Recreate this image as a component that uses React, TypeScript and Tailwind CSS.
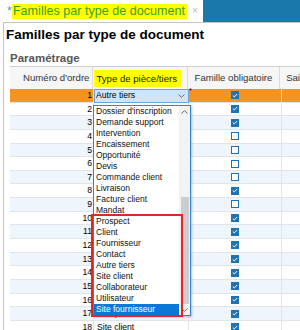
import React from 'react';

const ITEMS = [
  "Dossier d'inscription",
  'Demande support',
  'Intervention',
  'Encaissement',
  'Opportunité',
  'Devis',
  'Commande client',
  'Livraison',
  'Facture client',
  'Mandat',
  'Prospect',
  'Client',
  'Fournisseur',
  'Contact',
  'Autre tiers',
  'Site client',
  'Collaborateur',
  'Utilisateur',
  'Site fournisseur',
];

// row number, type, "famille obligatoire"
const ROWS: ReadonlyArray<{ n: number; type: string; req: boolean }> = [
  { n: 1, type: 'Autre tiers', req: true },
  { n: 2, type: "Dossier d'inscription", req: true },
  { n: 3, type: 'Demande support', req: true },
  { n: 4, type: 'Intervention', req: false },
  { n: 5, type: 'Encaissement', req: false },
  { n: 6, type: 'Opportunité', req: false },
  { n: 7, type: 'Devis', req: false },
  { n: 8, type: 'Commande client', req: true },
  { n: 9, type: 'Livraison', req: false },
  { n: 10, type: 'Facture client', req: true },
  { n: 11, type: 'Mandat', req: true },
  { n: 12, type: 'Client', req: true },
  { n: 13, type: 'Fournisseur', req: true },
  { n: 14, type: 'Contact', req: true },
  { n: 15, type: 'Collaborateur', req: true },
  { n: 16, type: 'Utilisateur', req: true },
  { n: 17, type: 'Prospect', req: true },
  { n: 18, type: 'Site client', req: true },
];

function CheckBox({ checked }: { checked: boolean }) {
  return (
    <span
      className={`flex items-center justify-center w-[8px] h-[8px] border border-[#1f73b4] ${
        checked ? 'bg-[#1f73b4]' : 'bg-white'
      }`}
    >
      {checked && (
        <svg width="6" height="5" viewBox="0 0 6 5" fill="none">
          <path d="M0.8 2.6 L2.3 3.9 L5.2 1" stroke="white" strokeWidth="1" />
        </svg>
      )}
    </span>
  );
}

function Chevron({ up = false }: { up?: boolean }) {
  return (
    <svg width="7" height="4" viewBox="0 0 7 4" fill="none">
      <path d={up ? 'M0.5 3.5 L3.5 0.7 L6.5 3.5' : 'M0.5 0.5 L3.5 3.3 L6.5 0.5'} stroke="#6b6b6b" strokeWidth="1" />
    </svg>
  );
}

export default function App() {
  return (
    <div className="relative w-[300px] h-[330px] overflow-hidden bg-white text-black font-['Liberation_Sans',Arial,sans-serif]">
      {/* tab bar */}
      <div className="flex h-[22px]">
        <div className="flex items-center w-[203px] bg-white pl-[7px] text-[12.6px] leading-[15px]">
          <span className="text-[#4aa3b4]">*</span>
          <span className="bg-[#ffff00] text-[#3f9e17] pl-[1px] pr-[2px]">Familles par type de document</span>
          <span className="ml-[5px] text-[10px] leading-[10px] text-[#b5b5b5]">×</span>
        </div>
        <div className="flex-1 bg-[#1a79aa]" />
      </div>

      <div className="ml-[3px] border-l border-t border-[#c4c4c4] h-[308px]">
        <div className="h-[24px] pl-[2px] text-[13.5px] leading-[24px] font-bold">Familles par type de document</div>

        <div className="ml-[6px] h-[20px] pt-[4px] border-b border-[#cfcfcf] text-[11.5px] leading-[14px] font-bold text-[#575757]">
          Paramétrage
        </div>

        <div className="ml-[6px]">
          {/* header */}
          <div className="flex h-[22px] bg-[#f6f6f6] text-[9.6px] text-[#333]">
            <div className="w-[84px] border-r border-[#dadada] flex items-center justify-end pr-[3px]">Numéro d'ordre</div>
            <div className="w-[95px] border-r border-[#dadada] flex items-center">
              <span className="ml-[1px] w-[87px] h-[17px] bg-[#ffff00] pl-[2px] leading-[17px] text-[#222]">
                Type de pièce/tiers
              </span>
            </div>
            <div className="w-[93px] border-r border-[#dadada] flex items-center justify-center">Famille obligatoire</div>
            <div className="flex-1 flex items-center pl-[6px]">Sai</div>
          </div>

          {/* body */}
          {ROWS.map((r, i) => {
            const sel = i === 0;
            const bg = sel ? 'bg-[#f39322]' : i % 2 === 1 ? 'bg-white' : 'bg-[#eef5fc]';
            return (
              <div key={r.n} className={`flex h-[13.65px] text-[8.6px] leading-[13.65px] ${bg}`}>
                <div className="w-[84px] border-r border-b border-[#e1e5ea] text-right pr-[1px]">{r.n}</div>
                {sel ? (
                  <div className="w-[95px] flex items-center justify-between bg-[#cfe4f7] border border-[#6aa5d8] pl-[1px] pr-[3px]">
                    <span>{r.type}</span>
                    <Chevron />
                  </div>
                ) : (
                  <div className="w-[95px] border-r border-b border-[#e1e5ea] pl-[3px]">{r.type}</div>
                )}
                <div className="relative w-[93px] border-r border-b border-[#e1e5ea] flex items-center justify-center">
                  {sel && <span className="absolute left-[0px] top-[-3px] text-[7px] leading-[10px]">*</span>}
                  <CheckBox checked={r.req} />
                </div>
                <div className="flex-1 border-b border-[#e1e5ea]" />
              </div>
            );
          })}
        </div>
      </div>

      {/* open dropdown list */}
      <div className="absolute left-[93px] top-[105px] w-[98px] h-[211px] flex bg-white border border-[#2f86cf] shadow-[1px_1px_2px_rgba(0,0,0,0.25)]">
        <div className="flex-1 flex flex-col text-[8.5px] leading-[11px]">
          {ITEMS.map((it, i) => (
            <div
              key={it}
              className={`h-[11px] pl-[2px] whitespace-nowrap overflow-hidden ${
                i === ITEMS.length - 1 ? 'bg-[#0a78d4] text-white' : 'text-[#111]'
              }`}
            >
              {it}
            </div>
          ))}
        </div>
        <div className="w-[11px] flex flex-col items-center bg-[#f3f3f3]">
          <div className="h-[11px] flex items-center justify-center">
            <Chevron up />
          </div>
          <div className="flex-1" />
          <div className="w-[8px] h-[107px] bg-[#cdcdcd]" />
          <div className="h-[11px] flex items-center justify-center">
            <Chevron />
          </div>
        </div>
      </div>

      {/* red annotation box */}
      <div className="absolute left-[91px] top-[214px] w-[92px] h-[103px] border-2 border-[#e52427]" />
    </div>
  );
}
